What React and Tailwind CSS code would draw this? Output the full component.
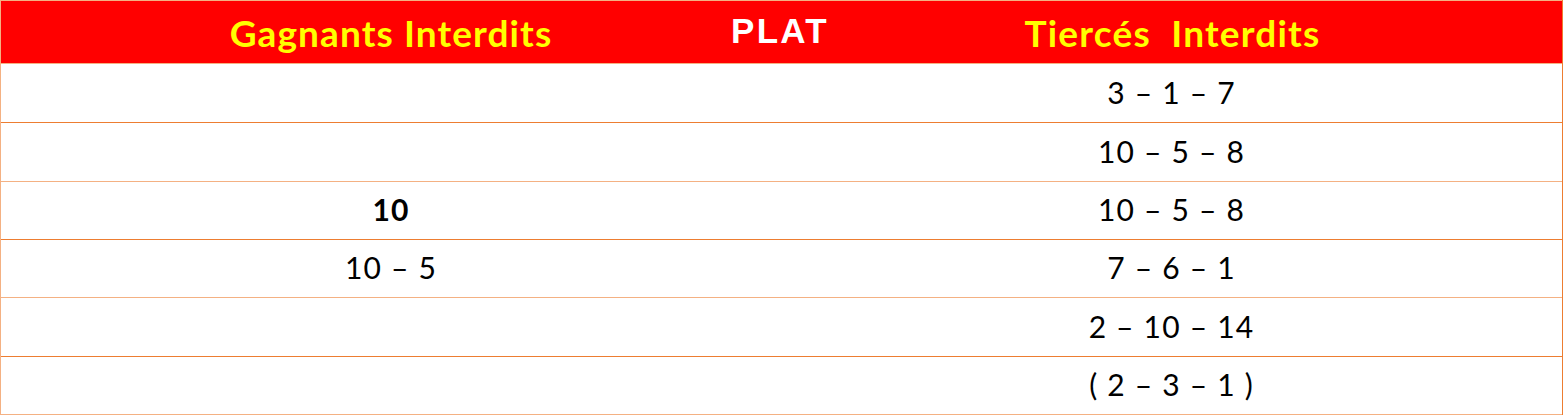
import React from "react";

const rows = [
  { left: "", leftBold: false, right: "3 – 1 – 7", h: "h-[59px]", line: "border-[#ed7d31]" },
  { left: "", leftBold: false, right: "10 – 5 – 8", h: "h-[59px]", line: "border-[#f4b183]" },
  { left: "10", leftBold: true, right: "10 – 5 – 8", h: "h-[58px]", line: "border-[#ed7d31]" },
  { left: "10 – 5", leftBold: false, right: "7 – 6 – 1", h: "h-[58px]", line: "border-[#f4b183]" },
  { left: "", leftBold: false, right: "2 – 10 – 14", h: "h-[59px]", line: "border-[#ed7d31]" },
  { left: "", leftBold: false, right: "( 2 – 3 – 1 )", h: "h-[58px]", line: "border-[#f4b183]" },
];

const calibri = "font-['Lato','Liberation_Sans',sans-serif]";

export default function App() {
  return (
    <div className="w-[1563px] h-[416px] bg-white">
      <div className="w-full border-l border-l-[#f4b183] border-r border-r-[#ed7d31]">
        {/* header */}
        <div className="grid grid-cols-[730px_98px_1fr] h-[64px] bg-[#ff0000] border-t border-t-[#f4b183] border-b border-b-[#f4b183] items-center">
          <div className={`pl-[50px] text-center text-[#ffff00] font-bold text-[37px] tracking-[1.1px] leading-none pt-[1px] ${calibri}`}>
            Gagnants Interdits
          </div>
          <div className="text-center text-white font-bold text-[35px] tracking-[2.3px] leading-none font-['Liberation_Sans',Arial,sans-serif] -mt-[4px]">
            PLAT
          </div>
          <div className={`pr-[46px] text-center text-[#ffff00] font-bold text-[37px] tracking-[1.2px] leading-none pt-[1px] whitespace-pre ${calibri}`}>
            {"Tiercés  Interdits"}
          </div>
        </div>

        {/* rows */}
        {rows.map((row, i) => (
          <div
            key={i}
            className={`grid grid-cols-[780px_1fr] items-center border-b ${row.line} ${row.h} text-black text-[30px] tracking-[1.2px] leading-none ${calibri}`}
          >
            <div className={`text-center pb-[3px] ${row.leftBold ? "font-bold" : ""}`}>
              {row.left}
            </div>
            <div className="text-center pb-[3px]">{row.right}</div>
          </div>
        ))}
      </div>
    </div>
  );
}
